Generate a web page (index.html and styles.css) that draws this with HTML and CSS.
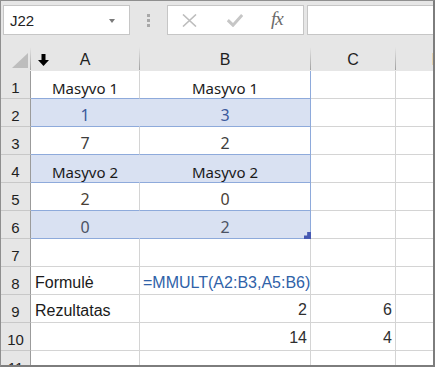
FILE: index.html
```html
<!DOCTYPE html>
<html lang="lt">
<head>
<meta charset="utf-8">
<title>MMULT</title>
<link rel="stylesheet" href="styles.css">
</head>
<body>
<div class="frame">
  <div class="toolbar">
    <div class="namebox"><span class="name">J22</span><span class="caret"></span></div>
    <div class="grip"><i></i><i></i><i></i></div>
    <div class="fbtns">
      <svg class="ic-x" width="15" height="13" viewBox="0 0 15 13"><path d="M1 0.5L14 12.5M14 0.5L1 12.5" stroke="#bdbdbd" stroke-width="1.6" fill="none"/></svg>
      <svg class="ic-ok" width="16" height="13" viewBox="0 0 16 13"><path d="M0.8 6.2L6 11.2L15.2 1" stroke="#c6c6c6" stroke-width="3" fill="none"/></svg>
      <span class="fx">fx</span>
    </div>
    <div class="finput"></div>
  </div>
  <div class="sheet">
    <div class="ch corner"><svg width="16" height="15" viewBox="0 0 16 15"><polygon points="16,0 16,15 0,15" fill="#bdbdbd"/></svg></div>
    <div class="ch colA"><svg class="arrow" width="11" height="12" viewBox="0 0 11 12"><rect x="3.5" y="0" width="4" height="6" fill="#000"/><polygon points="0,6 11,6 5.5,12" fill="#000"/></svg>A</div>
    <div class="ch">B</div>
    <div class="ch">C</div>
    <div class="ch">D</div>

    <div class="rh">1</div>
    <div class="c t a hd">Masyvo 1</div>
    <div class="c t bcol hd">Masyvo 1</div>
    <div class="c"></div><div class="c"></div>

    <div class="rh">2</div>
    <div class="c t a band num blue">1</div>
    <div class="c t bcol band num blue">3</div>
    <div class="c"></div><div class="c"></div>

    <div class="rh">3</div>
    <div class="c t a num">7</div>
    <div class="c t bcol num">2</div>
    <div class="c"></div><div class="c"></div>

    <div class="rh">4</div>
    <div class="c t a band hd">Masyvo 2</div>
    <div class="c t bcol band hd">Masyvo 2</div>
    <div class="c"></div><div class="c"></div>

    <div class="rh">5</div>
    <div class="c t a num brown">2</div>
    <div class="c t bcol num brown">0</div>
    <div class="c"></div><div class="c"></div>

    <div class="rh">6</div>
    <div class="c t a band num grey">0</div>
    <div class="c t bcol band num grey handle-cell">2<span class="handle"></span></div>
    <div class="c"></div><div class="c"></div>

    <div class="rh">7</div>
    <div class="c"></div><div class="c"></div><div class="c"></div><div class="c"></div>

    <div class="rh">8</div>
    <div class="c txt">Formulė</div>
    <div class="c txt formula">=MMULT(A2:B3,A5:B6)</div>
    <div class="c"></div><div class="c"></div>

    <div class="rh">9</div>
    <div class="c txt">Rezultatas</div>
    <div class="c txt right">2</div>
    <div class="c txt right">6</div>
    <div class="c"></div>

    <div class="rh">10</div>
    <div class="c"></div>
    <div class="c txt right">14</div>
    <div class="c txt right">4</div>
    <div class="c"></div>

    <div class="rh">11</div>
    <div class="c"></div><div class="c"></div><div class="c"></div><div class="c"></div>
  </div>
</div>
</body>
</html>
```
FILE: styles.css
```css
html, body {
  margin: 0;
  padding: 0;
  background: #ffffff;
}

.frame {
  box-sizing: border-box;
  width: 435px;
  height: 367px;
  border-left: 1px solid #8f8f8f;
  border-top: 1px solid #8f8f8f;
  border-right: 2px solid #7d7d7d;
  border-bottom: 2px solid #7d7d7d;
  overflow: hidden;
  background: #e6e6e6;
  font-family: "Liberation Sans", Arial, sans-serif;
  color: #1f1f1f;
}

/* ---------- formula bar ---------- */
.toolbar {
  box-sizing: border-box;
  height: 46px;
  padding: 4px 0 0 2px;
  display: flex;
  align-items: flex-start;
  background: #e6e6e6;
}

.namebox {
  box-sizing: border-box;
  width: 127px;
  height: 30px;
  background: #fff;
  border: 1px solid #c6c6c6;
  display: flex;
  align-items: center;
  justify-content: space-between;
  padding: 0 14px 0 6px;
}

.name {
  font-size: 15px;
  color: #222;
  margin-top: 1px;
}

.caret {
  width: 0;
  height: 0;
  border-left: 3.5px solid transparent;
  border-right: 3.5px solid transparent;
  border-top: 4px solid #7a7a7a;
  margin-top: 1px;
}

.grip {
  width: 37px;
  height: 30px;
  display: flex;
  flex-direction: column;
  align-items: center;
  justify-content: center;
  gap: 2px;
}

.grip i {
  display: block;
  width: 3px;
  height: 3px;
  background: #a8a8a8;
}

.fbtns {
  box-sizing: border-box;
  width: 137px;
  height: 30px;
  background: #fff;
  border: 1px solid #c6c6c6;
  display: flex;
  align-items: center;
}

.ic-x {
  margin-left: 14px;
  margin-top: 1px;
}

.ic-ok {
  margin-left: 30px;
  margin-top: 1px;
}

.fx {
  margin-left: 28px;
  font-family: "Liberation Serif", "DejaVu Serif", serif;
  font-style: italic;
  font-size: 19px;
  letter-spacing: -1px;
  color: #6a6a6a;
  margin-top: -2px;
}

.finput {
  box-sizing: border-box;
  flex: 1;
  height: 30px;
  margin-left: 3px;
  background: #fff;
  border: 1px solid #c6c6c6;
  border-right: none;
}

/* ---------- grid ---------- */
.sheet {
  display: grid;
  grid-template-columns: 30px 109px 171px 85px 84px;
  grid-template-rows: 24px repeat(11, 28px);
  background: #fff;
}

.sheet > div {
  box-sizing: border-box;
  display: flex;
  align-items: flex-end;
  min-width: 0;
  overflow: hidden;
  white-space: nowrap;
}

.ch {
  position: relative;
  background: #e6e6e6;
  justify-content: center;
  font-size: 16px;
  line-height: 18px;
  padding-bottom: 1px;
  color: #1f1f1f;
  border-bottom: 1px solid #9b9b9b;
  border-right: 1px solid #a8a8a8;
  border-image: linear-gradient(to bottom, #e6e6e6, #a0a0a0) 0 1 0 0;
  border-image-slice: 0 1 0 0;
}

.ch.corner {
  justify-content: flex-end;
  padding: 0 2px 2px 0;
}

.ch .arrow {
  position: absolute;
  left: 7px;
  top: 7px;
}

.sheet > .ch {
  border-bottom: 1px solid #9b9b9b;
}

.rh {
  background: #e6e6e6;
  justify-content: center;
  font-size: 15px;
  line-height: 17px;
  padding-bottom: 2px;
  color: #1f1f1f;
  border-right: 1px solid #9b9b9b;
  border-bottom: 1px solid #c8c8c8;
}

.c {
  border-right: 1px solid #d4d4d4;
  border-bottom: 1px solid #d4d4d4;
}

/* table range A1:B6 */
.t {
  justify-content: center;
  font-family: "Noto Sans", "Open Sans", sans-serif;
  font-size: 15px;
  line-height: 20px;
  color: #1a1a1a;
  border-bottom-color: #8eaadb;
}

.t.hd {
  padding-bottom: 0;
}

.t.num {
  font-size: 16px;
  padding-bottom: 1px;
  color: #3d3d3d;
}

.t.bcol {
  border-right-color: #8eaadb;
}

.band {
  background: #d9e1f2;
}

.t.a.band {
  border-right-color: #d9e1f2;
}

.t.num.blue {
  color: #3b5a9c;
}

.t.num.brown {
  color: #4a3f36;
}

.t.num.grey {
  color: #4b5263;
}

.handle-cell {
  position: relative;
  overflow: visible !important;
}

.handle {
  position: absolute;
  right: -1px;
  bottom: -1px;
  width: 7px;
  height: 7px;
  background: #4659b3;
  clip-path: polygon(45% 0, 100% 0, 100% 100%, 0 100%, 0 50%, 45% 50%);
}

/* plain text cells */
.txt {
  font-family: "Liberation Sans", Arial, sans-serif;
  font-size: 16px;
  line-height: 18px;
  padding: 0 3px 2px 4px;
  color: #1a1a1a;
}

.txt.right {
  justify-content: flex-end;
  padding-bottom: 3px;
  color: #2f2f2f;
}

.formula {
  padding-left: 3px;
  color: #2f62a8;
  overflow: visible !important;
}
```
